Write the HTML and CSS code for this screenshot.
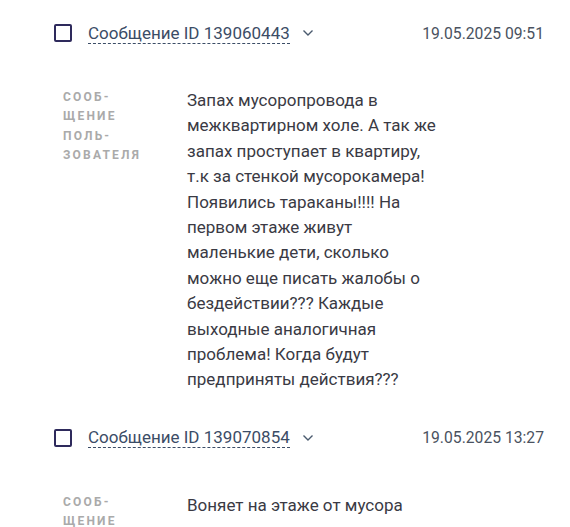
FILE: index.html
```html
<!DOCTYPE html>
<html lang="ru">
<head>
    <meta charset="UTF-8">
    <title>Сообщения</title>
    <link rel="stylesheet" href="styles.css">
</head>
<body>

<div class="messages">
    <div class="message">
        <div class="message-head">
            <span class="checkbox"></span>
            <span class="message-title">Сообщение ID 139060443</span>
            <svg class="chevron" width="12" height="8" viewBox="0 0 12 8"><path d="M1.5 1.5 L6 6 L10.5 1.5" fill="none" stroke="#4a5a6e" stroke-width="1.4"/></svg>
            <span class="message-date">19.05.2025 09:51</span>
        </div>
        <div class="message-body">
            <div class="message-label">Сооб-<br>щение<br>поль-<br>зователя</div>
            <div class="message-text">Запах мусоропровода в межквартирном холе. А так же запах проступает в квартиру, т.к за стенкой мусорокамера! Появились тараканы!!!! На первом этаже живут маленькие дети, сколько можно еще писать жалобы о бездействии??? Каждые выходные аналогичная проблема! Когда будут предприняты действия???</div>
        </div>
    </div>

    <div class="message">
        <div class="message-head">
            <span class="checkbox"></span>
            <span class="message-title">Сообщение ID 139070854</span>
            <svg class="chevron" width="12" height="8" viewBox="0 0 12 8"><path d="M1.5 1.5 L6 6 L10.5 1.5" fill="none" stroke="#4a5a6e" stroke-width="1.4"/></svg>
            <span class="message-date">19.05.2025 13:27</span>
        </div>
        <div class="message-body">
            <div class="message-label">Сооб-<br>щение<br>поль-<br>зователя</div>
            <div class="message-text">Воняет на этаже от мусора</div>
        </div>
    </div>
</div>

</body>
</html>
```

FILE: styles.css
```css
body {
    font-family: Roboto, "Liberation Sans", sans-serif;
    background-color: #fff;
    margin: 0;
    padding: 0;
}
.messages {
    padding: 17px 26px 0 54px;
}
.message {
    margin-bottom: 29px;
}
.message-head {
    display: flex;
    align-items: center;
    height: 32px;
}
.checkbox {
    width: 18px;
    height: 18px;
    box-sizing: border-box;
    border: 2px solid #2e2a5c;
    border-radius: 2px;
    margin-right: 16px;
}
.message-title {
    font-size: 17px;
    color: #3b4c66;
    border-bottom: 1px dashed #3b4c66;
    line-height: 20px;
}
.chevron {
    margin-left: 12px;
}
.message-date {
    margin-left: auto;
    font-size: 15.7px;
    color: #4a5260;
}
.message-body {
    display: flex;
    margin-top: 39px;
}
.message-label {
    width: 133px;
    flex-shrink: 0;
    padding-left: 9px;
    box-sizing: border-box;
    font-size: 12px;
    font-weight: 700;
    letter-spacing: 2.2px;
    text-transform: uppercase;
    color: #aaa;
    line-height: 19.3px;
}
.message-text {
    width: 254px;
    font-size: 17px;
    line-height: 25.4px;
    color: #3a3a44;
}
```
